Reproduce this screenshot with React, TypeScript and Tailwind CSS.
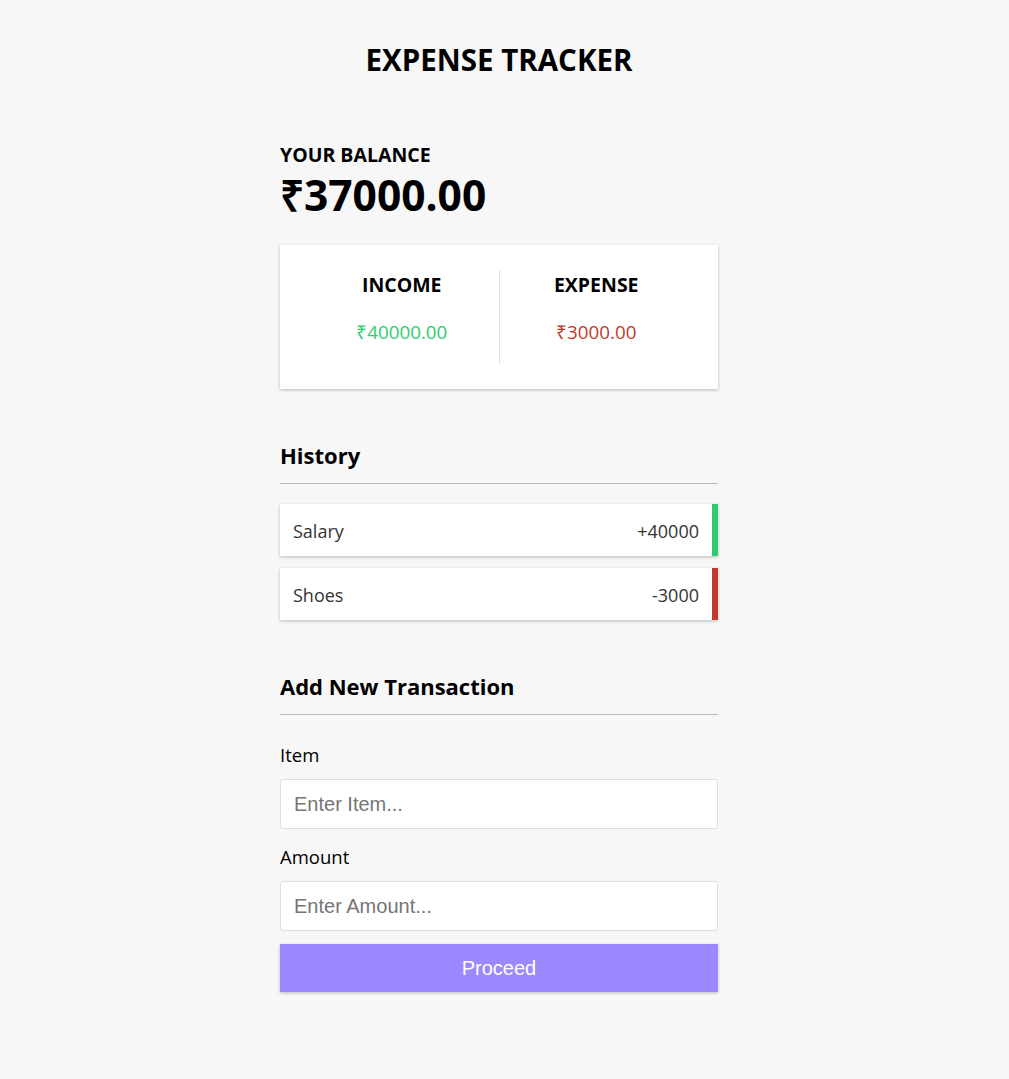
import React from "react";

const history = [
  { name: "Salary", amount: "+40000", color: "border-[#2ecc71]" },
  { name: "Shoes", amount: "-3000", color: "border-[#c0392b]" },
];

const App = () => {
  return (
    <div className="min-h-[1079px] bg-[#f7f7f7] text-black font-['Open_Sans',sans-serif]">
      <div className="w-[438px] ml-[280px] pt-[43px] pb-[80px]">
        <h1 className="text-center text-[29.5px] font-bold leading-[34px]">
          EXPENSE TRACKER
        </h1>

        <div className="mt-[66px]">
          <h4 className="text-[19.5px] font-bold leading-[24px]">YOUR BALANCE</h4>
          <h1 className="mt-[4px] text-[42.5px] font-bold leading-[48px]">
            ₹37000.00
          </h1>
        </div>

        <div className="mt-[26px] flex bg-white p-[25px] shadow-[0_1px_3px_rgba(0,0,0,0.25)]">
          <div className="flex-1 border-r border-[#dddddd] pb-[20px] text-center">
            <h4 className="text-[19.5px] font-bold leading-[30px]">INCOME</h4>
            <p className="mt-[20px] text-[18.8px] leading-[24px] text-[#2ecc71]">
              ₹40000.00
            </p>
          </div>
          <div className="flex-1 pb-[20px] text-center">
            <h4 className="text-[19.5px] font-bold leading-[30px]">EXPENSE</h4>
            <p className="mt-[20px] text-[18.8px] leading-[24px] text-[#c0392b]">
              ₹3000.00
            </p>
          </div>
        </div>

        <h3 className="mt-[52px] border-b border-[#bbbbbb] pb-[14px] text-[22px] font-bold leading-[28px]">
          History
        </h3>
        <ul className="mt-[20px] flex flex-col gap-[12px]">
          {history.map((h) => (
            <li
              key={h.name}
              className={`flex h-[52px] items-center justify-between border-r-[6px] bg-white px-[13px] pt-[2px] text-[18px] text-[#333333] shadow-[0_1px_3px_rgba(0,0,0,0.25)] ${h.color}`}
            >
              <span>{h.name}</span>
              <span>{h.amount}</span>
            </li>
          ))}
        </ul>

        <h3 className="mt-[52px] border-b border-[#bbbbbb] pb-[14px] text-[22px] font-bold leading-[28px]">
          Add New Transaction
        </h3>
        <form className="flex flex-col">
          <label className="mt-[28px] text-[18.5px] leading-[24px]">Item</label>
          <input
            type="text"
            placeholder="Enter Item..."
            className="mt-[12px] h-[50px] rounded-[3px] border border-[#dedede] bg-white px-[13px] font-['Liberation_Sans',Arial,sans-serif] text-[20px] placeholder:text-[#757575] outline-none"
          />
          <label className="mt-[16px] text-[18.5px] leading-[24px]">Amount</label>
          <input
            type="number"
            placeholder="Enter Amount..."
            className="mt-[12px] h-[50px] rounded-[3px] border border-[#dedede] bg-white px-[13px] font-['Liberation_Sans',Arial,sans-serif] text-[20px] placeholder:text-[#757575] outline-none"
          />
          <button
            type="button"
            className="mt-[13px] h-[48px] bg-[#9c88ff] font-['Liberation_Sans',Arial,sans-serif] text-[20px] text-white shadow-[0_1px_3px_rgba(0,0,0,0.25)]"
          >
            Proceed
          </button>
        </form>
      </div>
    </div>
  );
};

export default App;
